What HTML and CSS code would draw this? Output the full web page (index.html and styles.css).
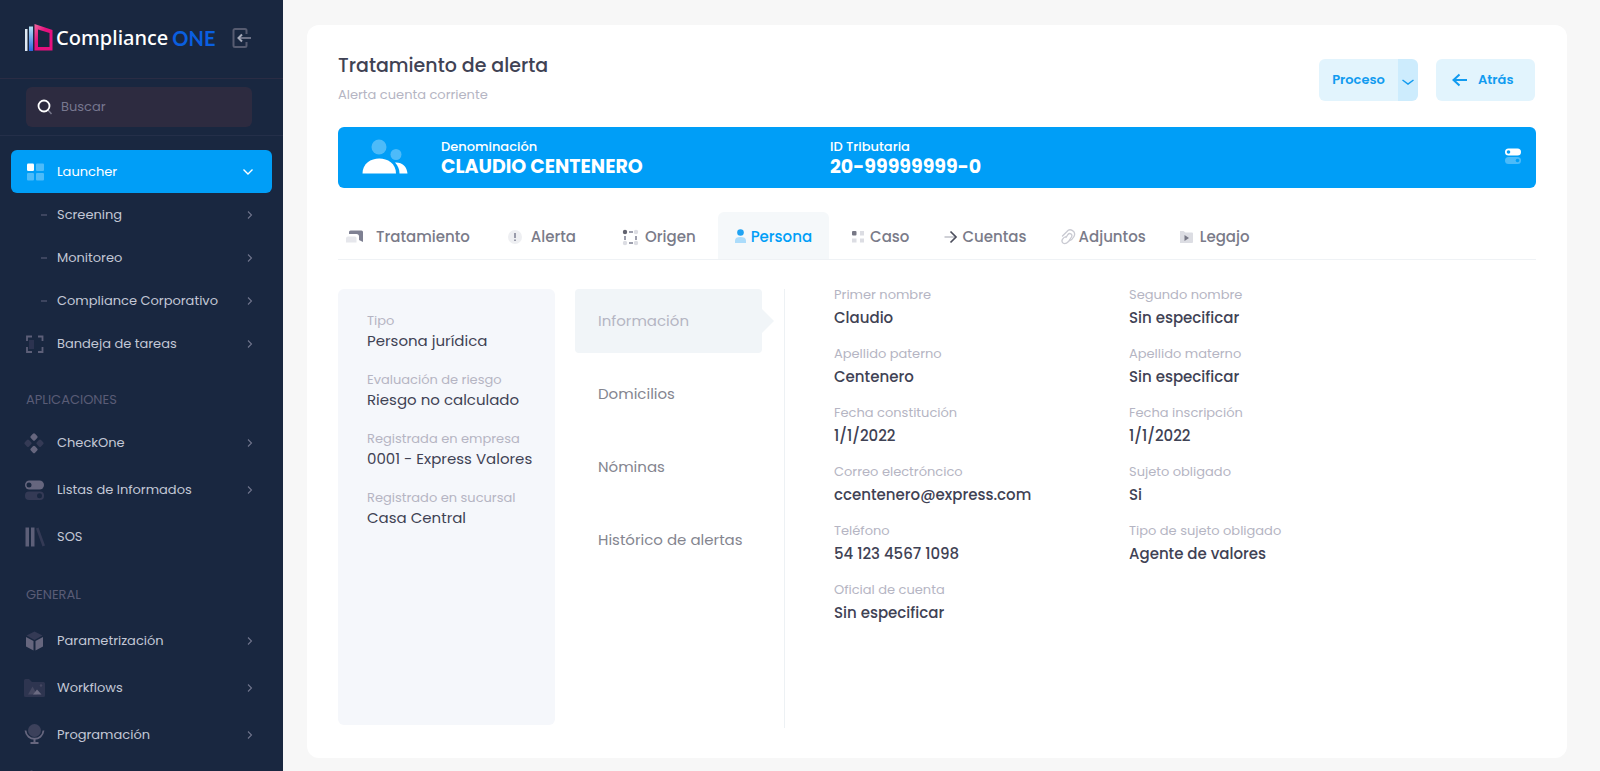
FILE: index.html
```html
<!DOCTYPE html>
<html lang="es">

<head>
    <meta charset="UTF-8">
    <meta name="viewport" content="width=device-width, initial-scale=1.0">
    <title>Compliance ONE</title>
    <link rel="stylesheet" href="styles.css">
</head>

<body>
    <svg width="0" height="0" class="defs">
        <symbol id="chevron" viewBox="0 0 8 10">
            <path d="M2 1.500l3.500 3.500-3.500 3.500" fill="none" stroke="currentColor" stroke-width="1.100" />
        </symbol>
        <symbol id="dash" viewBox="0 0 24 24">
            <path d="M18 12h6" stroke="#565b75" stroke-width="1.200" />
        </symbol>
    </svg>

    <aside class="sidebar">
        <div class="brand">
            <a class="logo" href="#">
                <svg width="28" height="28" viewBox="0 0 28 28">
                    <defs>
                        <linearGradient id="bar" x1="0" y1="0" x2="0" y2="1">
                            <stop offset="0" stop-color="#b5e3f5" />
                            <stop offset="1" stop-color="#2b66dd" />
                        </linearGradient>
                        <linearGradient id="frame" x1="0" y1="0" x2="1" y2="1">
                            <stop offset="0" stop-color="#f0679c" />
                            <stop offset="0.4" stop-color="#e6107e" />
                        </linearGradient>
                    </defs>
                    <path d="M0 5h2.500v22H0z" fill="#dfe8f2" />
                    <path d="M4 2.500h4v24.500H4z" fill="url(#bar)" />
                    <path d="M9.500 0L27.500 6V26.500H9.500zM13 5.500V23H24.500V9z" fill="url(#frame)" fill-rule="evenodd" />
                </svg>
                <span class="logo-name">Compliance</span><span class="logo-one">ONE</span>
            </a>
            <button class="collapse" type="button" aria-label="Contraer">
                <svg width="20" height="20" viewBox="0 0 20 20" fill="none">
                    <path d="M14.500 6V2.500a1.500 1.500 0 0 0-1.500-1.500H3a1.500 1.500 0 0 0-1.500 1.500v15A1.500 1.500 0 0 0 3 19h10a1.500 1.500 0 0 0 1.500-1.500V14" stroke="#565b70" stroke-width="2" />
                    <path d="M6 10h13" stroke="#6b7085" stroke-width="2" />
                    <path d="M10 6.500L6.500 10l3.500 3.500" stroke="#a5a9b8" stroke-width="2" />
                </svg>
            </button>
        </div>

        <div class="search">
            <label class="search-box">
                <svg width="16" height="16" viewBox="0 0 16 16" fill="none">
                    <path d="M11 11l3.500 4" stroke="#77778a" stroke-width="1.500" />
                    <circle cx="7" cy="7" r="5.500" stroke="#fff" stroke-width="1.800" />
                </svg>
                <input type="text" placeholder="Buscar" aria-label="Buscar">
            </label>
        </div>

        <nav class="nav">
            <ul>
                <li>
                    <a class="item active" href="#">
                        <svg class="icon" viewBox="0 0 24 24" fill="#fff">
                            <rect x="4" y="3.500" width="7" height="7.500" rx="1.200" />
                            <path d="M13 4.500a1 1 0 0 1 1-1h6a1 1 0 0 1 1 1V10a1 1 0 0 1-1 1h-6a1 1 0 0 1-1-1zM4 14a1 1 0 0 1 1-1h5a1 1 0 0 1 1 1v5.500a1 1 0 0 1-1 1H5a1 1 0 0 1-1-1zM13 14a1 1 0 0 1 1-1h6a1 1 0 0 1 1 1v5.500a1 1 0 0 1-1 1h-6a1 1 0 0 1-1-1z" opacity="0.300" />
                        </svg>
                        Launcher
                        <svg class="down" width="12" height="8" viewBox="0 0 12 8" fill="none">
                            <path d="M1.500 1.500L6 6l4.500-4.500" stroke="#fff" stroke-width="1.400" />
                        </svg>
                    </a>
                </li>
                <li><a class="item" href="#"><svg class="icon"><use href="#dash" /></svg>Screening<svg class="arrow"><use href="#chevron" /></svg></a></li>
                <li><a class="item" href="#"><svg class="icon"><use href="#dash" /></svg>Monitoreo<svg class="arrow"><use href="#chevron" /></svg></a></li>
                <li><a class="item" href="#"><svg class="icon"><use href="#dash" /></svg>Compliance Corporativo<svg class="arrow"><use href="#chevron" /></svg></a></li>
                <li>
                    <a class="item" href="#">
                        <svg class="icon" viewBox="0 0 24 24" fill="none">
                            <path d="M6 8h5v9H6z" fill="#2c3350" />
                            <path d="M4 9V4.500h5M15 4.500h4.500V9M19.500 15v5H15M9 20H4v-5" stroke="#5d5f78" stroke-width="1.800" />
                        </svg>
                        Bandeja de tareas
                        <svg class="arrow"><use href="#chevron" /></svg>
                    </a>
                </li>
            </ul>

            <h2>APLICACIONES</h2>
            <ul class="wide">
                <li>
                    <a class="item" href="#">
                        <svg class="icon" viewBox="0 0 24 24">
                            <g fill="#66667e">
                                <rect x="8" y="3" width="6" height="6" rx="1.500" transform="rotate(45 11 6)" />
                                <rect x="8" y="15.500" width="6" height="6" rx="1.500" transform="rotate(45 11 18.500)" />
                            </g>
                            <g fill="#343a55">
                                <rect x="2" y="9.200" width="6" height="6" rx="1.500" transform="rotate(45 5 12.200)" />
                                <rect x="14" y="9.200" width="6" height="6" rx="1.500" transform="rotate(45 17 12.200)" />
                            </g>
                        </svg>
                        CheckOne
                        <svg class="arrow"><use href="#chevron" /></svg>
                    </a>
                </li>
                <li>
                    <a class="item" href="#">
                        <svg class="icon" viewBox="0 0 24 24">
                            <rect x="2" y="2.500" width="19" height="9" rx="4.500" fill="#66667e" />
                            <circle cx="6" cy="7" r="2.500" fill="#192740" />
                            <rect x="2" y="13.500" width="19" height="8.500" rx="4" fill="#343a55" />
                            <circle cx="16.500" cy="17.700" r="2.500" fill="#192740" />
                        </svg>
                        Listas de Informados
                        <svg class="arrow"><use href="#chevron" /></svg>
                    </a>
                </li>
                <li>
                    <a class="item" href="#">
                        <svg class="icon" viewBox="0 0 24 24">
                            <path d="M2.500 2.500h3.500v19H2.500zM8 2.500h3.500v19H8z" fill="#5d5f78" />
                            <path d="M13 3.500l2.500-1 6.500 18-2.500 1z" fill="#343a55" />
                        </svg>
                        SOS
                    </a>
                </li>
            </ul>

            <h2>GENERAL</h2>
            <ul class="wide last">
                <li>
                    <a class="item" href="#">
                        <svg class="icon" viewBox="0 0 24 24">
                            <path d="M3.500 6.500L11.500 2.500l8 4-8 4.500z" fill="#343a55" />
                            <path d="M3 8l7.500 4v9.500L3 17.500zM20 8l-7.500 4v9.500l7.500-4z" fill="#66667e" />
                        </svg>
                        Parametrización
                        <svg class="arrow"><use href="#chevron" /></svg>
                    </a>
                </li>
                <li>
                    <a class="item" href="#">
                        <svg class="icon" viewBox="0 0 24 24">
                            <path d="M1 4.500a1.500 1.500 0 0 1 1.500-1.500H6l3 3h11.500a1.500 1.500 0 0 1 1.500 1.500v12a1.500 1.500 0 0 1-1.500 1.500h-18a1.500 1.500 0 0 1-1.500-1.500z" fill="#2e3550" />
                            <path d="M5 18.500l4.500-8 4.500 8z" fill="#454861" />
                            <path d="M10 18.500l4-5 4.500 5z" fill="#6b6b82" />
                            <circle cx="18" cy="9.500" r="1.200" fill="#454861" />
                        </svg>
                        Workflows
                        <svg class="arrow"><use href="#chevron" /></svg>
                    </a>
                </li>
                <li>
                    <a class="item" href="#">
                        <svg class="icon" viewBox="0 0 24 24" fill="none">
                            <circle cx="11.500" cy="7.500" r="6.500" fill="#3c415b" />
                            <path d="M2.500 7.500c1 11 17 11 18 0" stroke="#66667e" stroke-width="1.800" />
                            <path d="M11.500 15v4M7.500 20h8" stroke="#66667e" stroke-width="2" />
                        </svg>
                        Programación
                        <svg class="arrow"><use href="#chevron" /></svg>
                    </a>
                </li>
                <li>
                    <a class="item" href="#">
                        <svg class="icon" viewBox="0 0 24 24"><path d="M8.500 0l8.500 5v10l-8.500 5-8.500-5V5z" fill="#3c415b" /></svg>
                    </a>
                </li>
            </ul>
        </nav>
    </aside>

    <main class="main">
        <div class="card">
            <header class="head">
                <div class="head-text">
                    <h1>Tratamiento de alerta</h1>
                    <p>Alerta cuenta corriente</p>
                </div>
                <div class="actions">
                    <div class="split">
                        <button class="split-main" type="button">Proceso</button>
                        <button class="split-more" type="button" aria-label="Más procesos">
                            <svg width="14" height="8" viewBox="0 0 14 8" fill="none">
                                <path d="M1.500 2L7 6l5.500-4" stroke="currentColor" stroke-width="1.500" />
                            </svg>
                        </button>
                    </div>
                    <button class="back" type="button">
                        <svg width="16" height="14" viewBox="0 0 16 14" fill="none">
                            <path d="M1.500 7H15M7.500 1.500L1.500 7l6 5.500" stroke="currentColor" stroke-width="2" />
                        </svg>
                        Atrás
                    </button>
                </div>
            </header>

            <section class="banner">
                <svg class="people" width="46" height="36" viewBox="0 0 46 36">
                    <g fill="#fff" opacity="0.300">
                        <circle cx="17" cy="8" r="7.500" />
                        <circle cx="34" cy="15.500" r="5.500" />
                    </g>
                    <path d="M0.500 34.500C0.500 14.500 34 14.500 34 34.500z" fill="#fff" />
                    <path d="M33 23.500c7-0.500 12 4 12.500 11h-8c0-4-1.500-8-4.500-11z" fill="#fff" />
                </svg>
                <div class="banner-field">
                    <span>Denominación</span>
                    <strong>CLAUDIO CENTENERO</strong>
                </div>
                <div class="banner-field">
                    <span>ID Tributaria</span>
                    <strong>20-99999999-0</strong>
                </div>
                <svg class="toggles" width="16" height="16" viewBox="0 0 16 16">
                    <rect y="0.500" width="16" height="7" rx="3.500" fill="#fff" />
                    <circle cx="3.500" cy="4" r="1.800" fill="#009ef7" />
                    <rect y="9" width="16" height="7" rx="3.500" fill="#fff" opacity="0.300" />
                    <circle cx="12.500" cy="12.500" r="1.800" fill="#009ef7" />
                </svg>
            </section>

            <nav class="tabs">
                <a href="#">
                    <svg width="30" height="18" viewBox="0 0 30 18">
                        <path d="M3 6V4a1.500 1.500 0 0 1 1.500-1.500h11A1.500 1.500 0 0 1 17 4v10l-4-2V8.500A2.500 2.500 0 0 0 10.500 6z" fill="#7e8092" />
                        <path d="M2 8.500h7a1.500 1.500 0 0 1 1.500 1.500v4.500H0V10.500A2 2 0 0 1 2 8.500z" fill="#e6e7ec" />
                    </svg>
                    Tratamiento
                </a>
                <a href="#">
                    <svg width="27" height="18" viewBox="0 0 27 18">
                        <circle cx="11" cy="9" r="7" fill="#eeeff2" />
                        <path d="M11 5v5M11 11.500V13" stroke="#7e8092" stroke-width="1.500" />
                    </svg>
                    Alerta
                </a>
                <a href="#">
                    <svg width="35" height="18" viewBox="0 0 35 18">
                        <path d="M15 8v4M26 8v4M19 4h4M19 15h4" fill="none" stroke="#7e8092" stroke-width="1.500" />
                        <circle cx="15" cy="4" r="2.200" fill="#62636f" />
                        <g fill="#dcdde3">
                            <circle cx="26" cy="4" r="2.200" />
                            <circle cx="15" cy="15" r="2.200" />
                            <circle cx="26" cy="15" r="2.200" />
                        </g>
                    </svg>
                    Origen
                </a>
                <a class="current" href="#">
                    <svg width="16" height="18" viewBox="0 0 16 18">
                        <circle cx="5.500" cy="4.500" r="3.300" fill="#1fa3f3" />
                        <path d="M0 15v-2.500C0 10 2 9 5.500 9s5.500 1 5.500 3.500V15z" fill="#abdcfb" />
                    </svg>
                    Persona
                </a>
                <a href="#">
                    <svg width="24" height="18" viewBox="0 0 24 18">
                        <rect x="6" y="3" width="4.500" height="4.500" rx="1" fill="#777886" />
                        <path d="M14 3h4v4.500h-4zM6 10.500h4.500v4H6zM14 10.500h4v4h-4z" fill="#dcdde3" />
                    </svg>
                    Caso
                </a>
                <a href="#">
                    <svg width="19" height="18" viewBox="0 0 19 18" fill="none">
                        <path d="M1.500 9H12" stroke="#bfc0c9" stroke-width="1.500" />
                        <path d="M7.500 3.500L13 9l-5.500 5.500" stroke="#4c4e5d" stroke-width="1.700" />
                    </svg>
                    Cuentas
                </a>
                <a href="#">
                    <svg width="18" height="18" viewBox="0 0 18 18" fill="none">
                        <g stroke="#c9cad2" stroke-width="1.300" stroke-linecap="round">
                            <path d="M1.500 8L6 3.500C9-0.500 15.500 3.500 13 8.500c-1 2-2.500 3.500-4.500 4" />
                            <path d="M5 8.500c-3 1-5.500 4.500-3 6.500 2 1.500 4 0 5.500-1.500l3-4.500c1.500-3-2-4.500-3.500-2.500L5 9.500" />
                        </g>
                    </svg>
                    Adjuntos
                </a>
                <a href="#">
                    <svg width="20" height="18" viewBox="1 0 20 18">
                        <path d="M0 4a1 1 0 0 1 1-1h3.500l2 1.500H13a1 1 0 0 1 1 1V14a1 1 0 0 1-1 1H1a1 1 0 0 1-1-1z" fill="#dcdde3" />
                        <path d="M5.500 7l4.500 3-4.500 3z" fill="#777886" />
                    </svg>
                    Legajo
                </a>
            </nav>

            <div class="content">
                <dl class="summary">
                    <div><dt>Tipo</dt><dd>Persona jurídica</dd></div>
                    <div><dt>Evaluación de riesgo</dt><dd>Riesgo no calculado</dd></div>
                    <div><dt>Registrada en empresa</dt><dd>0001 - Express Valores</dd></div>
                    <div><dt>Registrado en sucursal</dt><dd>Casa Central</dd></div>
                </dl>

                <nav class="menu">
                    <a class="selected" href="#">Información</a>
                    <a href="#">Domicilios</a>
                    <a href="#">Nóminas</a>
                    <a href="#">Histórico de alertas</a>
                </nav>

                <dl class="details">
                    <div><dt>Primer nombre</dt><dd>Claudio</dd></div>
                    <div><dt>Segundo nombre</dt><dd>Sin especificar</dd></div>
                    <div><dt>Apellido paterno</dt><dd>Centenero</dd></div>
                    <div><dt>Apellido materno</dt><dd>Sin especificar</dd></div>
                    <div><dt>Fecha constitución</dt><dd>1/1/2022</dd></div>
                    <div><dt>Fecha inscripción</dt><dd>1/1/2022</dd></div>
                    <div><dt>Correo electróncico</dt><dd>ccentenero@express.com</dd></div>
                    <div><dt>Sujeto obligado</dt><dd>Si</dd></div>
                    <div><dt>Teléfono</dt><dd>54 123 4567 1098</dd></div>
                    <div><dt>Tipo de sujeto obligado</dt><dd>Agente de valores</dd></div>
                    <div><dt>Oficial de cuenta</dt><dd>Sin especificar</dd></div>
                </dl>
            </div>
        </div>
    </main>
</body>

</html>
```

FILE: styles.css
```css
* {
    padding: 0;
    margin: 0;
    box-sizing: border-box;
}

body {
    display: flex;
    min-height: 100vh;
    background-color: #f7f7f7;
    font-family: Poppins, Inter, sans-serif;
    font-size: 13px;
    color: #3f4254;
}

a {
    color: inherit;
    text-decoration: none;
}

ul {
    list-style: none;
}

button {
    border: none;
    font: inherit;
    cursor: pointer;
}

svg {
    flex-shrink: 0;
}

.defs {
    position: absolute;
}

/* sidebar */
.sidebar {
    width: 283px;
    height: 100vh;
    flex-shrink: 0;
    overflow: hidden;
    background-color: #192740;
}

.brand {
    height: 79px;
    padding: 0 31px 2px 25px;
    display: flex;
    align-items: center;
    justify-content: space-between;
    border-bottom: 1px solid #2a2c44;
}

.logo {
    display: flex;
    align-items: center;
    font-family: "Noto Sans", sans-serif;
    font-size: 20px;
    line-height: 28px;
    color: #fff;
}

.logo-name {
    margin-left: 3px;
    font-weight: 500;
}

.logo-one {
    margin-left: 4px;
    font-family: Lato, sans-serif;
    font-weight: 700;
    color: #0a5fe0;
}

.collapse {
    background: none;
    height: 20px;
}

.search {
    padding: 8px 31px 8px 26px;
    border-bottom: 1px solid #242f49;
}

.search-box {
    display: flex;
    align-items: center;
    gap: 8px;
    height: 40px;
    padding: 0 11px;
    border-radius: 6px;
    background-color: #2d2b40;
}

.search-box input {
    width: 100%;
    border: none;
    outline: none;
    background: none;
    font: inherit;
    color: #fff;
}

.search-box input::placeholder {
    color: #77778f;
}

.nav {
    padding: 14px 11px 0;
}

.item {
    display: flex;
    align-items: center;
    gap: 10px;
    height: 43px;
    padding: 0 18px 0 12px;
    color: #c3c7d6;
}

.item.active {
    border-radius: 6px;
    background-color: #009ef7;
    color: #fff;
}

.icon {
    width: 24px;
    height: 24px;
}

.arrow {
    width: 8px;
    height: 10px;
    margin-left: auto;
    color: #6f748c;
}

.down {
    margin-left: auto;
}

.nav h2 {
    padding: 25px 15px 9px;
    font-size: 13px;
    font-weight: 400;
    line-height: 20px;
    color: #5a5c76;
}

.wide .item {
    height: 47px;
}

.last {
    padding-top: 3px;
}

/* main card */
.main {
    flex: 1;
    min-width: 0;
    display: flex;
    padding: 25px 33px 13px 24px;
}

.card {
    flex: 1;
    min-width: 0;
    display: flex;
    flex-direction: column;
    padding: 27px 31px 30px;
    border-radius: 12px;
    background-color: #fff;
}

.head {
    display: flex;
    justify-content: space-between;
    padding-bottom: 22px;
}

.head h1 {
    font-size: 19px;
    font-weight: 500;
    line-height: 28px;
}

.head p {
    margin-top: 5px;
    line-height: 20px;
    color: #b5b5c3;
}

.actions {
    display: flex;
    gap: 18px;
    padding: 7px 1px 0 0;
    font-weight: 600;
}

.split {
    display: flex;
    width: 99px;
    height: 42px;
    border-radius: 6px;
    overflow: hidden;
}

.split-main,
.split-more,
.back {
    background-color: #e2f4fd;
    color: #119bf0;
}

.split-main {
    flex: 1;
}

.split-more {
    width: 20px;
    padding-top: 4px;
    background-color: #cdecfd;
}

.back {
    display: flex;
    align-items: center;
    gap: 10px;
    width: 99px;
    height: 42px;
    padding-left: 16px;
    border-radius: 6px;
}

.banner {
    display: flex;
    height: 61px;
    padding: 12px 15px 0 24px;
    border-radius: 6px;
    background-color: #009ef7;
    color: #fff;
}

.people {
    margin-right: 33px;
}

.banner-field {
    flex: 0 1 389px;
}

.banner-field span,
.banner-field strong {
    display: block;
}

.banner-field span {
    font-weight: 500;
    line-height: 16px;
}

.banner-field strong {
    font-size: 19px;
    font-weight: 700;
    line-height: 24px;
}

.toggles {
    margin: 9px 0 0 auto;
}

.tabs {
    display: flex;
    align-items: flex-end;
    margin-top: 24px;
    border-bottom: 1px solid #eff2f5;
    font-size: 15px;
    font-weight: 500;
    color: #7a7b89;
}

.tabs a {
    display: flex;
    align-items: center;
    height: 47px;
    padding: 2px 17px 0;
}

.tabs a:first-child {
    padding-left: 8px;
}

.tabs .current {
    margin-left: 5px;
    border-radius: 6px 6px 0 0;
    background-color: #f5f8fa;
    color: #009ef7;
}

.content {
    flex: 1;
    display: flex;
    padding-top: 25px;
}

dt {
    color: #b5b5c3;
}

.summary {
    width: 217px;
    margin: 4px 0 3px;
    padding: 24px 0 24px 29px;
    border-radius: 6px;
    background-color: #f5f7fb;
}

.summary div {
    margin-bottom: 19px;
}

.summary dt {
    line-height: 16px;
}

.summary dd {
    font-size: 15px;
    line-height: 24px;
    white-space: nowrap;
}

.menu {
    display: flex;
    flex-direction: column;
    gap: 9px;
    width: 210px;
    margin: 4px 0 0 20px;
    padding-right: 22px;
    border-right: 1px solid #edf1f4;
    font-size: 15px;
    color: #84858f;
}

.menu a {
    position: relative;
    padding-left: 23px;
    line-height: 64px;
    border-radius: 4px;
    white-space: nowrap;
}

.menu .selected {
    background-color: #f1f5f8;
    color: #b5b5c3;
}

.menu .selected::after {
    content: "";
    position: absolute;
    left: 100%;
    top: 20px;
    border: 12px solid transparent;
    border-left-color: #f1f5f8;
    border-right: none;
}

.details {
    flex: 1;
    display: grid;
    grid-template-columns: 295px 1fr;
    align-content: start;
    gap: 14px 0;
    padding-left: 49px;
}

.details dt {
    line-height: 20px;
}

.details dd {
    padding-top: 1px;
    font-size: 15px;
    font-weight: 500;
    line-height: 24px;
}
```
